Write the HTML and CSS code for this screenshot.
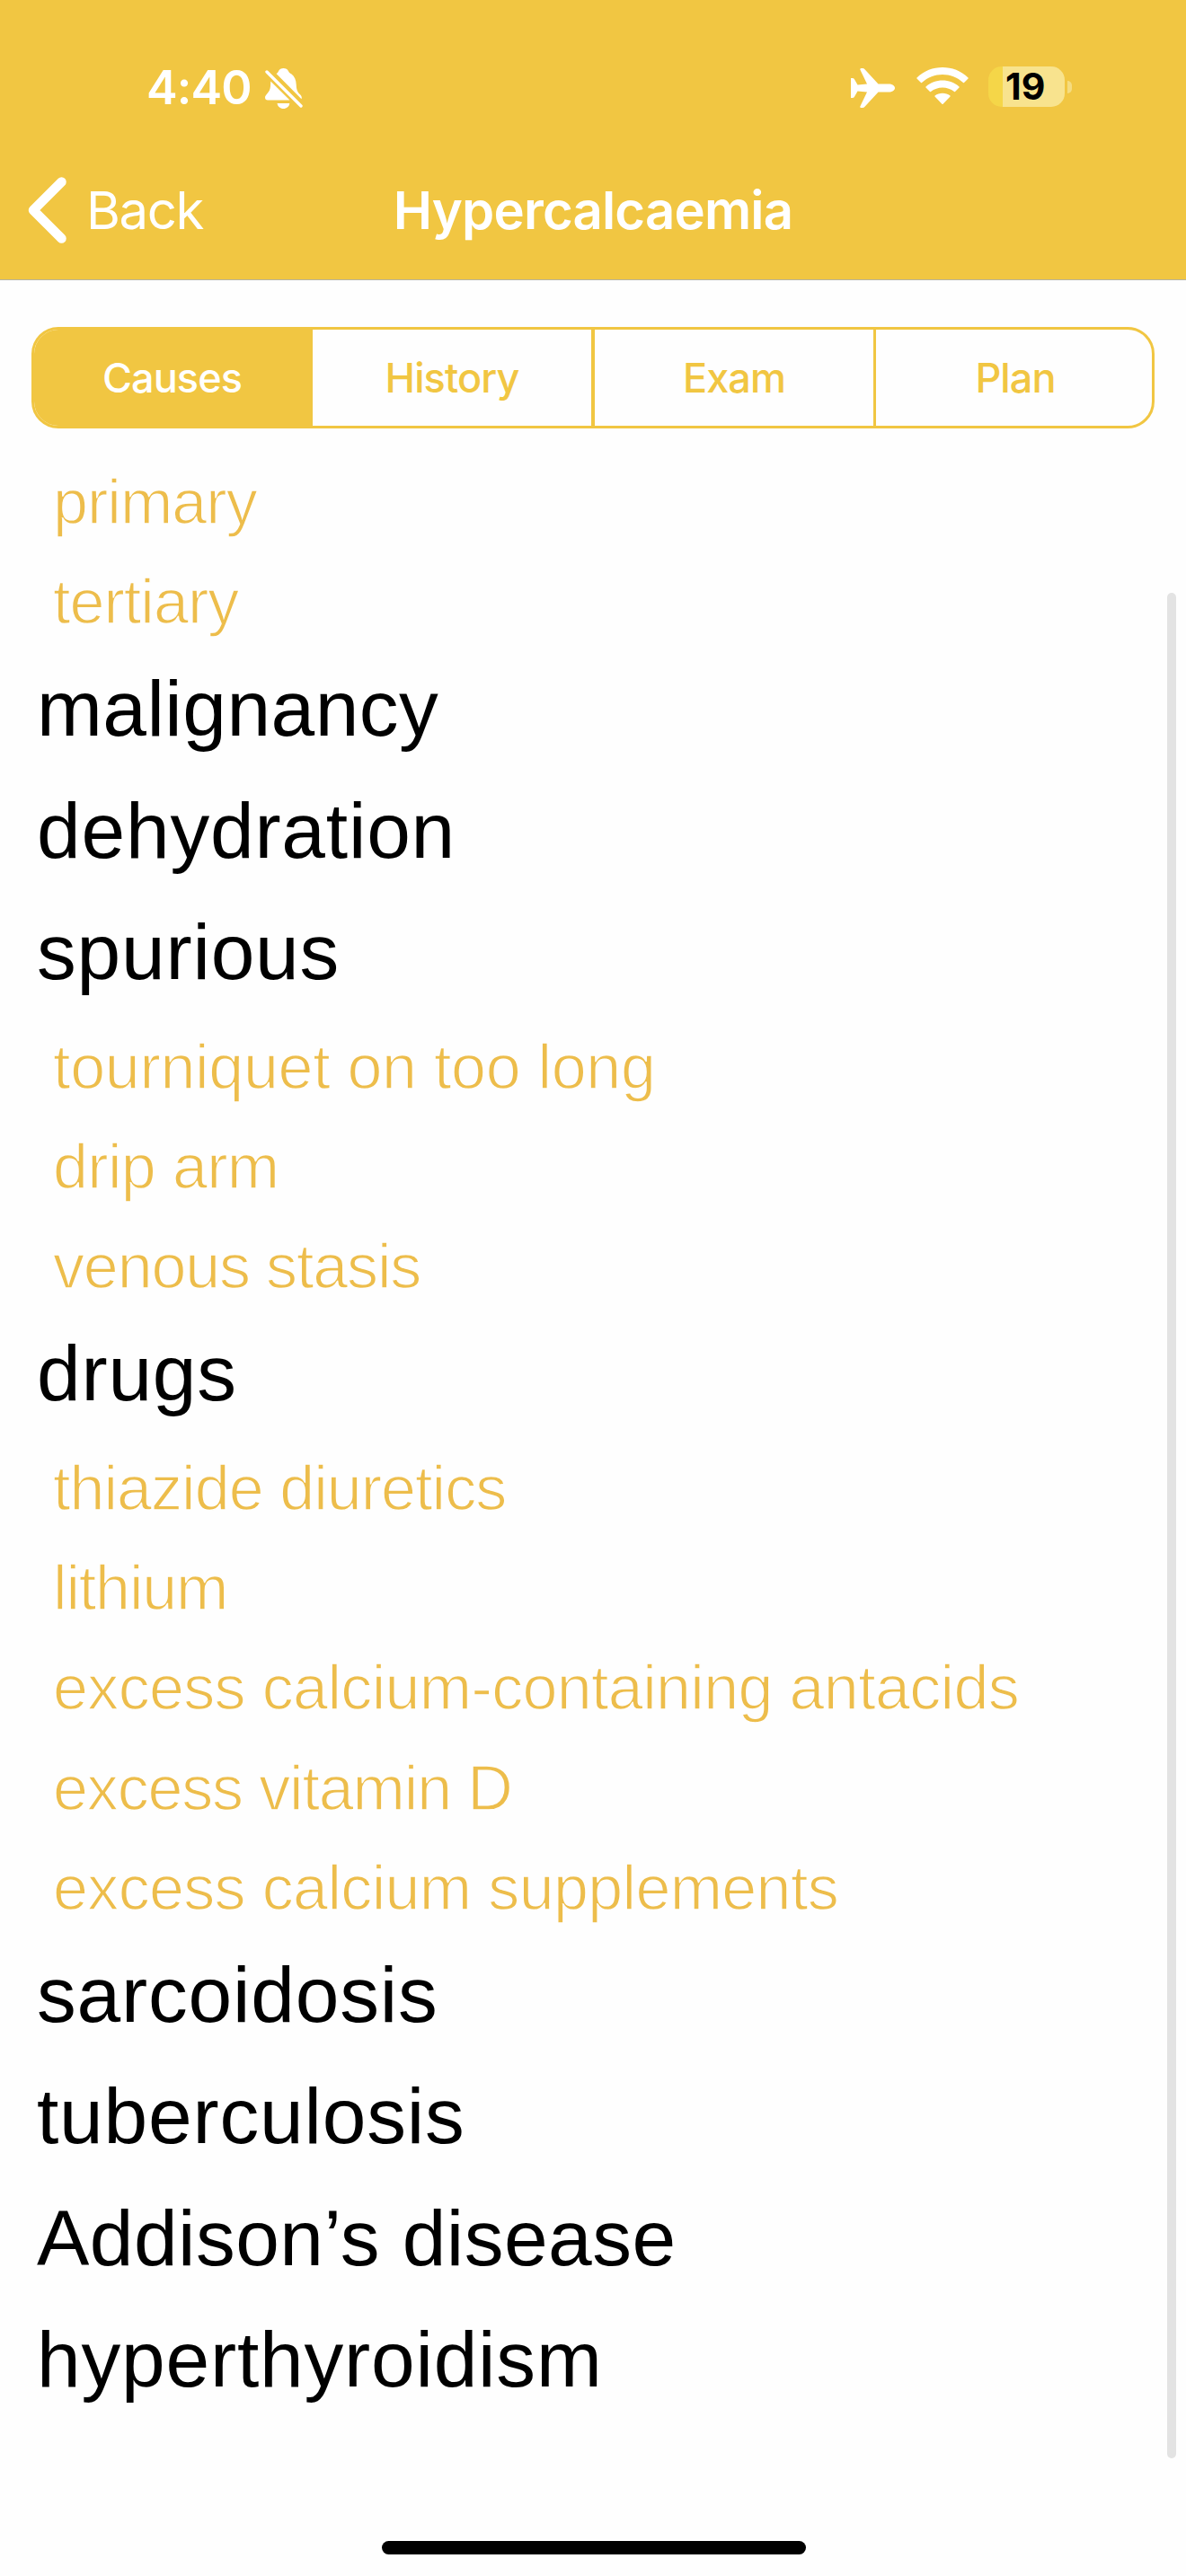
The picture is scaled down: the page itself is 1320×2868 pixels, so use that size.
FILE: index.html
```html
<!DOCTYPE html>
<html lang="en">
<head>
<meta charset="utf-8">
<title>Hypercalcaemia</title>
<link rel="stylesheet" href="styles.css">
</head>
<body>
<div class="screen">
  <header class="header">
    <div class="status">
      <div class="status-left">
        <span class="time">4:40</span>
        <svg class="bell" viewBox="0 0 42 45" width="42" height="45">
          <path fill="#fff" d="M6.300 14.500L27.500 35.500H3C1 35.500 0 34.200 0 32.500C0 29 5.500 27.500 6 20ZM12.500 6C14 5.200 14.500 4.500 15 3.200C16 1.200 18 0 20.500 0C23 0 25 1.200 26 3.200C26.700 4.800 27.500 5.200 29.500 6.400C33 9 34.500 13 34.700 18C35 26 37 27 39.500 29.800C41 31.500 41 33 40.500 34.200ZM13.500 39H27.300C27 42.500 24 45 20.400 45C17 45 14 42.500 13.500 39Z"/>
          <path d="M2 4L40 42" stroke="#fff" stroke-width="3.400" stroke-linecap="round"/>
        </svg>
      </div>
      <div class="status-right">
        <svg class="plane" viewBox="0 0 49 44" width="49" height="44">
          <path fill="#fff" d="M0 11H2Q3 11 3.800 12L7.500 18.500L18 17.500L10.300 1.500Q10 0 11.500 0H13Q14.500 0 15.500 1.200L30.500 17.500H42C46 17.500 49 19.500 49 22C49 24.500 46 26.500 42 26.500H30.500L15.500 42.800Q14.500 44 13 44H11.500Q10 44 10.300 42.500L18 26.500L7.500 25.500L3.800 32Q3 33 2 33H0Z"/>
        </svg>
        <svg class="wifi" viewBox="0 0 58 42" width="58" height="42">
          <path fill="#fff" d="M0.500 12.500Q0 12 0.500 11.400C16 -3.800 42 -3.800 57.500 11.400Q58 12 57.500 12.500L53 17Q52.500 17.500 52 17C39 5 19 5 6 17Q5.500 17.500 5 17ZM10.500 22.500Q10 22 10.500 21.500C20.500 12.200 37.500 12.200 47.500 21.500Q48 22 47.500 22.500L43 27Q42.500 27.500 42 27C34.500 21 23.500 21 16 27Q15.500 27.500 15 27ZM20.500 32.500Q20 32 20.600 31.500C25 27.700 33 27.700 37.400 31.500Q38 32 37.500 32.500L29.600 40.800Q29 41.400 28.400 40.800Z"/>
        </svg>
        <div class="battery"><span class="battery-level">19</span></div>
        <span class="battery-tip"></span>
      </div>
    </div>
    <nav class="nav">
      <a class="back">
        <svg viewBox="0 0 43 74" width="43" height="74"><path d="M37.500 5.500L6 37L37.500 68.500" fill="none" stroke="#fff" stroke-width="10.500" stroke-linecap="round" stroke-linejoin="round"/></svg>
        <span class="back-label">Back</span>
      </a>
      <h1 class="title">Hypercalcaemia</h1>
      <span></span>
    </nav>
  </header>

  <div class="tabs">
    <div class="tab tab-active">Causes</div>
    <div class="tab tab-wide-rule">History</div>
    <div class="tab">Exam</div>
    <div class="tab">Plan</div>
  </div>

  <main class="list">
    <div class="sub">primary</div>
    <div class="sub">tertiary</div>
    <div class="head head-tight">malignancy</div>
    <div class="head">dehydration</div>
    <div class="head">spurious</div>
    <div class="sub sub-wide">tourniquet on too long</div>
    <div class="sub sub-loose">drip arm</div>
    <div class="sub sub-tight">venous stasis</div>
    <div class="head">drugs</div>
    <div class="sub">thiazide diuretics</div>
    <div class="sub sub-tight">lithium</div>
    <div class="sub sub-loose">excess calcium-containing antacids</div>
    <div class="sub sub-tight">excess vitamin D</div>
    <div class="sub sub-loose">excess calcium supplements</div>
    <div class="head">sarcoidosis</div>
    <div class="head">tuberculosis</div>
    <div class="head head-tight">Addison’s disease</div>
    <div class="head">hyperthyroidism</div>
  </main>

  <div class="scrollbar"></div>
  <div class="home-indicator"></div>
</div>
</body>
</html>
```
FILE: styles.css
```css
* { box-sizing: border-box; }

body {
  margin: 0;
  background: #fefefe;
  font-family: Inter, "Liberation Sans", sans-serif;
}

.screen {
  position: relative;
  display: flex;
  flex-direction: column;
  width: 1320px;
  height: 2868px;
  overflow: hidden;
}

.header {
  height: 312px;
  flex: none;
  background: #f1c642;
  border-bottom: 1px solid #b5b3a2;
  color: #fff;
}

/* Status bar */
.status {
  display: flex;
  justify-content: space-between;
  height: 156px;
  padding: 68px 127px 0 163px;
}

.status-left,
.status-right {
  display: flex;
  align-items: center;
  height: 60px;
}

.time {
  font-size: 52px;
  font-weight: 600;
  line-height: 60px;
  letter-spacing: -0.9px;
  width: 132px;
}

.plane { margin-right: 24px; }
.wifi { margin: -4px 22px 0 0; }

.battery {
  width: 85px;
  height: 45px;
  margin-top: -3px;
  border-radius: 15px;
  background: linear-gradient(to right, #f5d648 16px, #f8e38e 16px);
}

.battery-level {
  display: block;
  padding-left: 19px;
  font-size: 41px;
  font-weight: 700;
  line-height: 45px;
  color: #000;
}

.battery-tip {
  width: 5px;
  height: 14px;
  margin: -3px 0 0 3px;
  border-radius: 0 5px 5px 0;
  background: #f5dc80;
}

/* Navigation bar */
.nav {
  display: grid;
  grid-template-columns: 1fr auto 1fr;
  align-items: center;
  height: 155px;
}

.back {
  display: flex;
  align-items: center;
  padding-left: 31px;
  gap: 22px;
}

.back-label {
  font-size: 58px;
  font-weight: 400;
  letter-spacing: -1.4px;
}

.title {
  margin: 0;
  font-size: 58px;
  font-weight: 600;
  letter-spacing: -0.8px;
}

/* Segmented control */
.tabs {
  display: grid;
  grid-template-columns: 310px 314px 313px 1fr;
  flex: none;
  height: 113px;
  margin: 52px 35px 0;
  border: 3px solid #f1c642;
  border-radius: 30px;
  overflow: hidden;
}

.tab {
  display: flex;
  align-items: center;
  justify-content: center;
  border-right: 3px solid #f1c642;
  font-size: 45px;
  font-weight: 500;
  letter-spacing: -0.9px;
  color: #f1c642;
}

.tab-wide-rule { border-right-width: 4px; }

.tab:last-child {
  padding-left: 3px;
  border-right: 0;
}

.tab-active {
  background: #f1c642;
  color: #fff;
}

/* Cause list */
.list {
  padding-top: 27px;
  font-family: "Liberation Sans", Arial, sans-serif;
  white-space: nowrap;
}

.sub {
  height: 111.2px;
  padding-left: 59px;
  font-size: 70px;
  line-height: 111.2px;
  letter-spacing: -0.95px;
  color: #edbd4b;
  /* background-coloured outline slims the strokes to a light weight */
  -webkit-text-stroke: 1.4px #fefefe;
}

.sub-tight { letter-spacing: -1.15px; }
.sub-loose { letter-spacing: -0.65px; }
.sub-wide { letter-spacing: -0.3px; }

.head {
  height: 135.5px;
  padding-left: 41px;
  font-size: 87.5px;
  line-height: 127.5px;
  letter-spacing: 0.8px;
  color: #000;
}

.head-tight { letter-spacing: 0.46px; }

.scrollbar {
  position: absolute;
  top: 660px;
  left: 1299px;
  width: 10px;
  height: 2077px;
  border-radius: 5px;
  background: #e3e3e3;
}

.home-indicator {
  position: absolute;
  top: 2829px;
  left: 425px;
  width: 472px;
  height: 15px;
  border-radius: 8px;
  background: #000;
}
```
